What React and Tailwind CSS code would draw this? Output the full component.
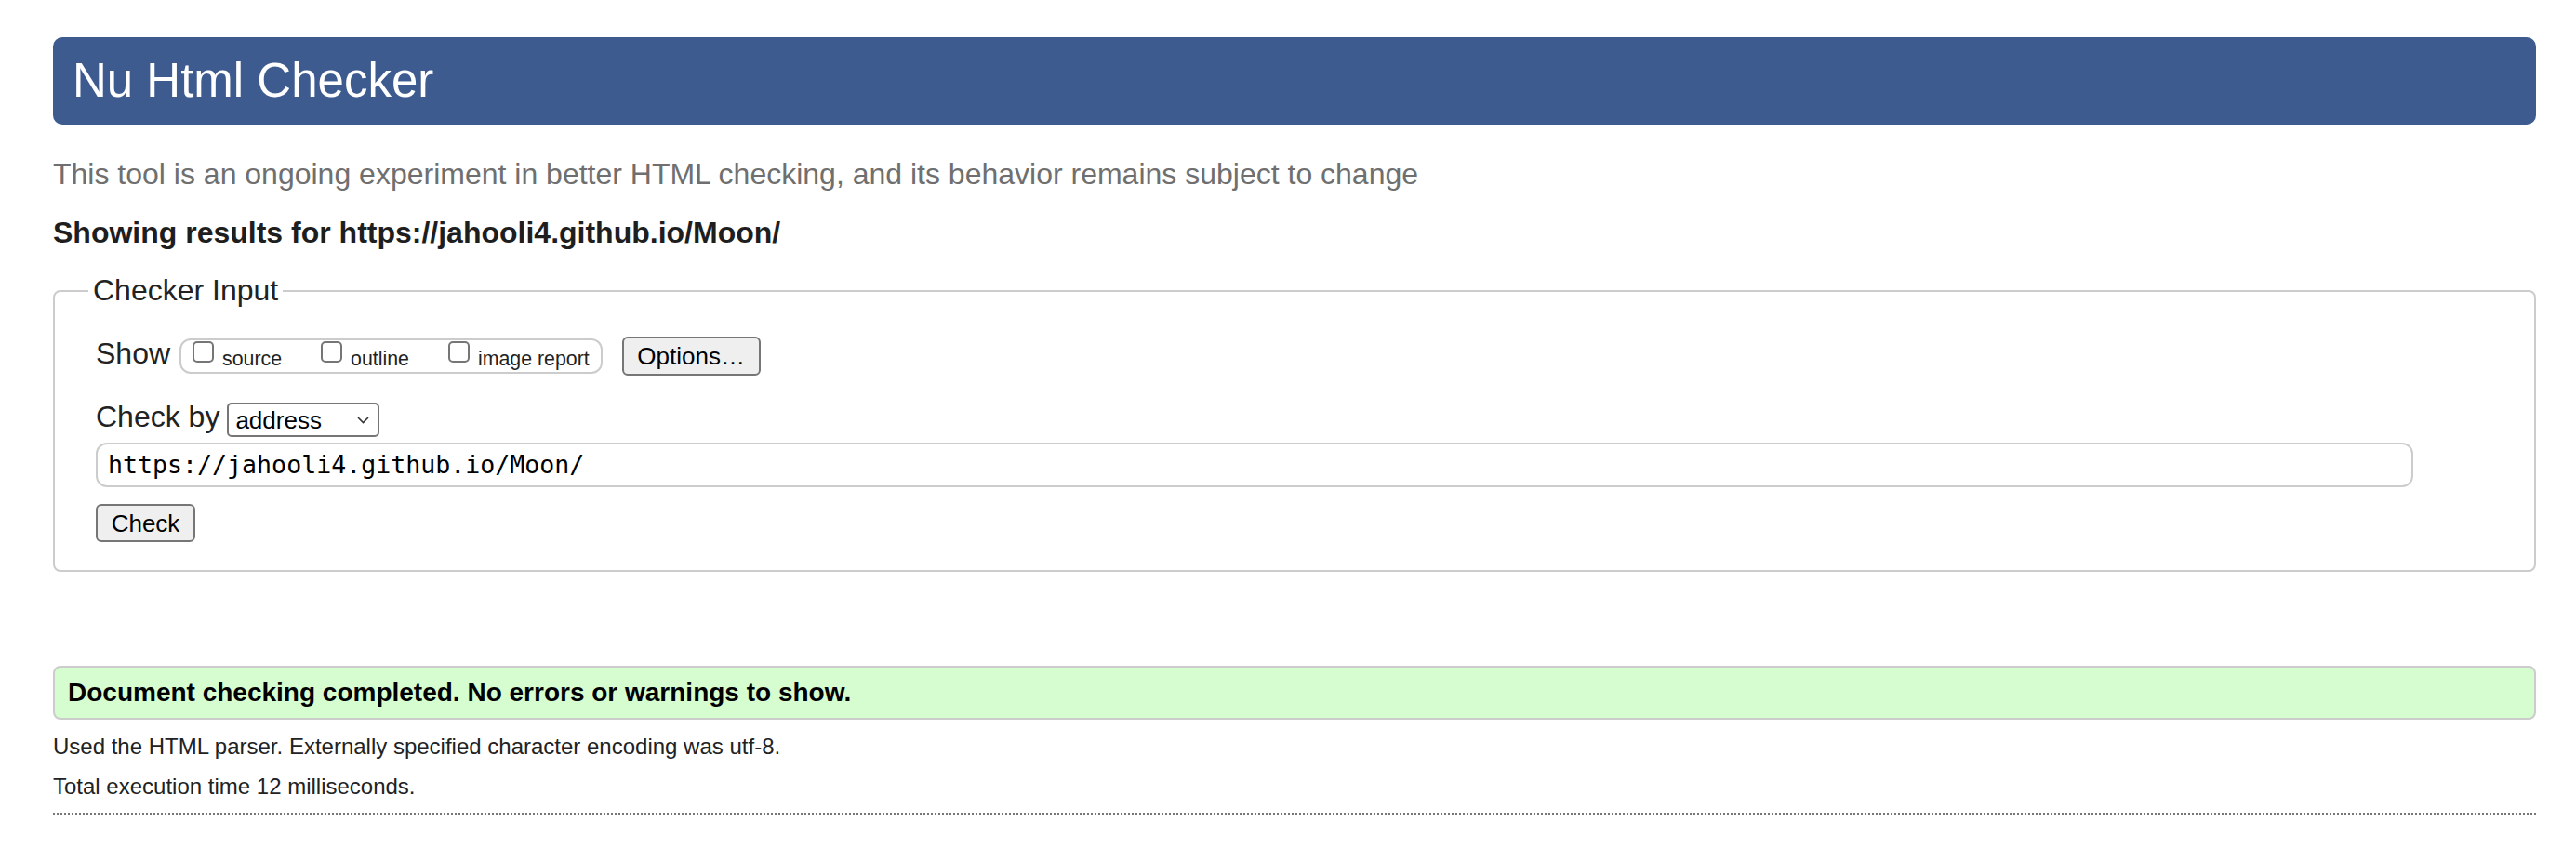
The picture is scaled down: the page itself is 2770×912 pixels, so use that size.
import { useState } from 'react'

const URL = 'https://jahooli4.github.io/Moon/'

function Box({ label }) {
  return (
    <label className="flex items-start">
      <span className="mt-[1px] w-[23px] h-[23px] border-2 border-[#767676] rounded-[5px] bg-white shrink-0"></span>
      <span className="ml-[9px] self-end mb-[2px] text-[21.33px] leading-[24px] text-[#222]">{label}</span>
    </label>
  )
}

function App() {
  const [url] = useState(URL)

  return (
    <div className="min-h-screen bg-white pt-[40px] pl-[57px] font-['Liberation_Sans',Arial,sans-serif] text-[#222]">
      <div className="w-[2670px]">
        {/* Header */}
        <div className="h-[94px] rounded-[10px] bg-[#3d5b8f] flex items-center pl-[21px]">
          <h1 className="text-[51px] leading-[58px] text-white">Nu Html Checker</h1>
        </div>

        <p className="mt-[35px] text-[32px] leading-[37px] text-[#6f6f6f]">
          This tool is an ongoing experiment in better HTML checking, and its behavior remains subject to change
        </p>
        <p className="mt-[26px] text-[32px] leading-[37px] font-bold text-[#1e1e1e]">
          Showing results for {url}
        </p>

        {/* Checker input */}
        <fieldset className="mt-[25px] border-2 border-[#cccccc] rounded-[8px] pt-[31px] pb-[30px]">
          <legend className="ml-[36px] px-[5px] text-[32px] leading-[37px]">Checker Input</legend>
          <div className="pl-[44px]">
            <div className="flex items-start h-[42px]">
              <span className="text-[32px] leading-[37px]">Show</span>
              <div className="ml-[10px] mt-[2px] h-[38px] border-2 border-[#cccccc] rounded-[12px] flex items-stretch px-[12px] gap-[42px]">
                <Box label="source" />
                <Box label="outline" />
                <Box label="image report" />
              </div>
              <button className="ml-[21px] w-[149px] h-[42px] bg-[#efefef] border-2 border-[#767676] rounded-[6px] text-[26px] leading-[30px] text-black flex items-center justify-center">
                Options…
              </button>
            </div>

            <div className="mt-[29px] flex items-start">
              <span className="text-[32px] leading-[31px]">Check by</span>
              <div className="ml-[8px] w-[164px] h-[37px] border-2 border-[#767676] rounded-[5px] bg-white flex items-center justify-between pl-[7px] pr-[9px]">
                <span className="text-[26px] leading-[30px] text-black">address</span>
                <svg width="13" height="8" viewBox="0 0 13 8" fill="none">
                  <path d="M1 1l5.5 5.5L12 1" stroke="#333" strokeWidth="1.6" />
                </svg>
              </div>
            </div>

            <div className="mt-[6px] w-[2492px] h-[48px] border-2 border-[#cccccc] rounded-[12px] flex items-center pl-[11px]">
              <span className="font-['DejaVu_Sans_Mono',Menlo,monospace] text-[26.6px] leading-[32px] text-black">{url}</span>
            </div>

            <button className="mt-[18px] w-[107px] h-[41px] bg-[#efefef] border-2 border-[#767676] rounded-[6px] text-[26px] leading-[30px] text-black flex items-center justify-center">
              Check
            </button>
          </div>
        </fieldset>

        {/* Result */}
        <div className="mt-[101px] h-[58px] border-2 border-[#cccccc] rounded-[8px] bg-[#d6fdd0] flex items-center pl-[14px]">
          <span className="text-[28px] leading-[32px] font-bold text-black">
            Document checking completed. No errors or warnings to show.
          </span>
        </div>

        <p className="mt-[15px] text-[24px] leading-[27px]">
          Used the HTML parser. Externally specified character encoding was utf-8.
        </p>
        <p className="mt-[16px] text-[24px] leading-[27px]">Total execution time 12 milliseconds.</p>

        <div className="mt-[15px] border-t-2 border-dotted border-[#777]"></div>
      </div>
    </div>
  )
}

export default App
